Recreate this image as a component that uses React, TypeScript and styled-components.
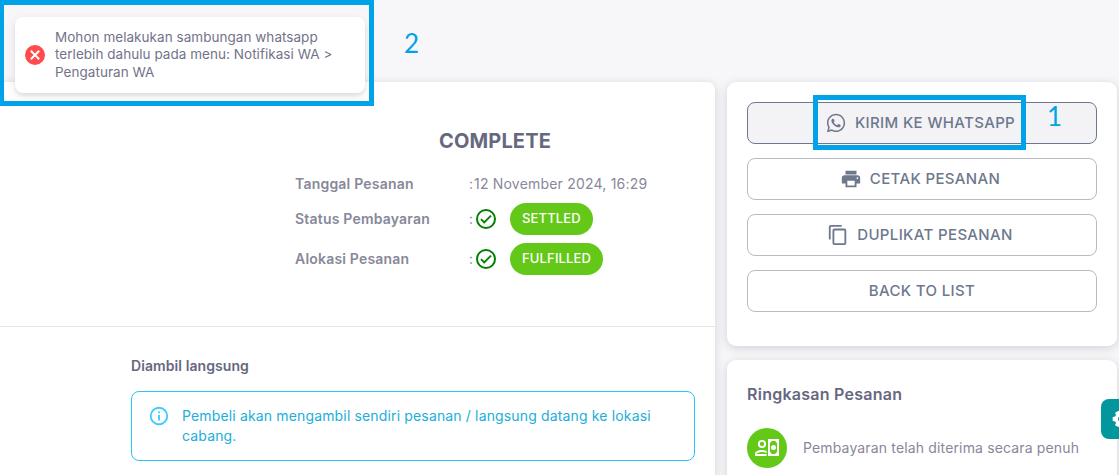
import React from 'react';
import styled, { createGlobalStyle } from 'styled-components';

const GlobalStyle = createGlobalStyle`
  *, *::before, *::after { box-sizing: border-box; }
  body {
    margin: 0;
    background: #f7f7f9;
    font-family: Inter, "Liberation Sans", sans-serif;
    color: rgba(76, 78, 100, 0.68);
    letter-spacing: 0.15px;
    overflow: hidden;
  }
  h2, h3, p { margin: 0; }
`;

const Page = styled.main`
  position: relative;
  display: flex;
  align-items: stretch;
  gap: 12px;
  width: 1119px;
  height: 475px;
  padding-top: 82px;
  overflow: hidden;
`;

const cardShadow = '0 2px 10px rgba(76, 78, 100, 0.22)';

const OrderCard = styled.section`
  width: 715px;
  height: 420px;
  background: #fff;
  border-radius: 0 8px 0 0;
  box-shadow: ${cardShadow};
`;

const Summary = styled.div`
  height: 245px;
  padding: 47px 0 0 295px;
  border-bottom: 1px solid #e5e5e8;
`;

const Status = styled.h2`
  width: 399px;
  padding-left: 144px;
  font-size: 20px;
  font-weight: 700;
  line-height: 24px;
  letter-spacing: 0.15px;
  color: #666880;
`;

const Details = styled.div`
  display: grid;
  grid-template-rows: 30px 40px 40px;
  margin-top: 16px;
`;

const DetailRow = styled.div`
  display: grid;
  grid-template-columns: 174px 1fr;
  align-items: center;
  font-size: 14px;
  color: #87889a;
`;

const Label = styled.span`
  padding-bottom: 2px;
  font-weight: 600;
  letter-spacing: 0.2px;
`;

const Value = styled.div`
  display: flex;
  align-items: center;
`;

const ValueText = styled.span`
  padding-bottom: 2px;
  letter-spacing: 0.2px;
`;

const Colon = styled.span`
  width: 5px;
  padding-bottom: 2px;
`;

const Pill = styled.span`
  display: flex;
  align-items: center;
  height: 32px;
  margin-left: 12px;
  padding: 0 12px 2px;
  border-radius: 16px;
  background: #64c818;
  color: #fff;
  font-size: 13px;
  font-weight: 500;
  letter-spacing: 0.15px;
`;

const Pickup = styled.div`
  padding: 28px 20px 0 131px;
`;

const PickupTitle = styled.h3`
  font-size: 14px;
  font-weight: 600;
  line-height: 21px;
  letter-spacing: 0.08px;
  color: #666880;
`;

const InfoBox = styled.div`
  display: flex;
  gap: 12px;
  height: 70px;
  margin-top: 15px;
  padding: 14px 16px;
  border: 1px solid #26c6f9;
  border-radius: 8px;
  color: #21aed9;
  font-size: 14px;
  line-height: 20px;
  svg { color: #3ccbf9; margin-top: -1px; }
`;

const Side = styled.aside`
  display: flex;
  flex-direction: column;
  gap: 14px;
  width: 390px;
`;

const SideCard = styled.section<{ $height: number }>`
  flex: none;
  height: ${(p) => p.$height}px;
  padding: 20px;
  background: #fff;
  border-radius: 9px;
  box-shadow: ${cardShadow};
`;

const ActionList = styled.div`
  display: flex;
  flex-direction: column;
  gap: 14px;
`;

const ActionButton = styled.button<{ $active?: boolean }>`
  display: flex;
  align-items: center;
  justify-content: center;
  gap: 8px;
  height: 42px;
  padding: 0;
  border: 1px solid ${(p) => (p.$active ? '#6d788d' : '#b6bbc6')};
  border-radius: 8px;
  background: ${(p) => (p.$active ? '#f3f3f6' : '#fff')};
  color: #6d788d;
  font-family: inherit;
  font-size: 15px;
  font-weight: 500;
  letter-spacing: 0.36px;
  svg { margin-left: -4px; }
`;

const ButtonLabel = styled.span`
  padding-bottom: 2px;
`;

const SideTitle = styled.h3`
  padding-top: 2px;
  font-size: 16px;
  font-weight: 600;
  line-height: 24px;
  letter-spacing: 0.25px;
  color: #666880;
`;

const PaymentRow = styled.div`
  display: flex;
  align-items: center;
  gap: 16px;
  margin-top: 22px;
  font-size: 14px;
  color: #87889a;
`;

const PaymentText = styled.span`
  padding-bottom: 2px;
`;

const Avatar = styled.span`
  display: grid;
  place-items: center;
  width: 40px;
  height: 40px;
  border-radius: 50%;
  background: #64c818;
  color: #fff;
`;

const SettingsTab = styled.div`
  position: absolute;
  top: 399px;
  right: -20px;
  display: flex;
  align-items: center;
  width: 38px;
  height: 40px;
  padding-left: 10px;
  border-radius: 8px;
  background: #02979d;
  color: #fff;
  svg { transform: rotate(30deg); }
`;

const Toast = styled.div`
  position: absolute;
  top: 17px;
  left: 15px;
  display: flex;
  align-items: center;
  width: 350px;
  height: 76px;
  padding: 8px 10px;
  border-radius: 8px;
  background: #fff;
  box-shadow: 0 3px 10px rgba(0, 0, 0, 0.1), 0 3px 3px rgba(0, 0, 0, 0.05);
  color: #72738a;
  font-size: 13.5px;
  line-height: 17.55px;
  letter-spacing: 0.04px;
`;

const ToastText = styled.p`
  margin: 0 10px;
  white-space: nowrap;
`;

const Marker = styled.div<{ $x: number; $y: number; $w: number; $h: number }>`
  position: absolute;
  left: ${(p) => p.$x}px;
  top: ${(p) => p.$y}px;
  width: ${(p) => p.$w}px;
  height: ${(p) => p.$h}px;
  border: 5px solid #00a2e8;
`;

const StepNumber = styled.span<{ $x: number; $y: number }>`
  position: absolute;
  left: ${(p) => p.$x}px;
  top: ${(p) => p.$y}px;
  color: #00a2e8;
  font-family: Lato, sans-serif;
  font-size: 26px;
  line-height: 32px;
  letter-spacing: 0;
`;

const Glyph = styled.svg`
  flex: none;
  display: block;
  fill: currentColor;
`;

const paths = {
  whatsapp:
    'M12.04 2C6.58 2 2.13 6.45 2.13 11.91C2.13 13.66 2.59 15.36 3.45 16.86L2.05 22L7.3 20.62C8.75 21.41 10.38 21.83 12.04 21.83C17.5 21.83 21.95 17.38 21.95 11.92C21.95 9.27 20.92 6.78 19.05 4.91C17.18 3.03 14.69 2 12.04 2M12.05 3.67C14.25 3.67 16.31 4.53 17.87 6.09C19.42 7.65 20.28 9.72 20.28 11.92C20.28 16.46 16.58 20.15 12.04 20.15C10.56 20.15 9.11 19.76 7.85 19L7.55 18.83L4.43 19.65L5.26 16.61L5.06 16.29C4.24 15 3.8 13.47 3.8 11.91C3.81 7.37 7.5 3.67 12.05 3.67M8.53 7.33C8.37 7.33 8.1 7.39 7.87 7.64C7.65 7.89 7 8.5 7 9.71C7 10.93 7.89 12.1 8 12.27C8.14 12.44 9.76 14.94 12.25 16C12.84 16.27 13.3 16.42 13.66 16.53C14.25 16.72 14.79 16.69 15.22 16.63C15.7 16.56 16.68 16.03 16.89 15.45C17.1 14.87 17.1 14.38 17.04 14.27C16.97 14.17 16.81 14.11 16.56 14C16.31 13.86 15.09 13.26 14.87 13.18C14.64 13.1 14.5 13.06 14.31 13.3C14.15 13.55 13.67 14.11 13.53 14.27C13.38 14.44 13.24 14.46 13 14.34C12.74 14.21 11.94 13.95 11 13.11C10.26 12.45 9.77 11.64 9.62 11.39C9.5 11.15 9.61 11 9.73 10.89C9.84 10.78 10 10.6 10.1 10.45C10.23 10.31 10.27 10.2 10.35 10.04C10.43 9.87 10.39 9.73 10.33 9.61C10.27 9.5 9.77 8.26 9.56 7.77C9.36 7.29 9.16 7.35 9 7.34C8.86 7.34 8.7 7.33 8.53 7.33Z',
  printer:
    'M18,3H6V7H18M19,12A1,1 0 0,1 18,11A1,1 0 0,1 19,10A1,1 0 0,1 20,11A1,1 0 0,1 19,12M16,19H8V14H16M19,8H5A3,3 0 0,0 2,11V17H6V21H18V17H22V11A3,3 0 0,0 19,8Z',
  copy:
    'M19,21H8V7H19M19,5H8A2,2 0 0,0 6,7V21A2,2 0 0,0 8,23H19A2,2 0 0,0 21,21V7A2,2 0 0,0 19,5M16,1H4A2,2 0 0,0 2,3V17H4V3H16V1Z',
  info:
    'M11,9H13V7H11M12,20C7.59,20 4,16.41 4,12C4,7.59 7.59,4 12,4C16.41,4 20,7.59 20,12C20,16.41 16.41,20 12,20M12,2A10,10 0 0,0 2,12A10,10 0 0,0 12,22A10,10 0 0,0 22,12A10,10 0 0,0 12,2M11,17H13V11H11V17Z',
  cog:
    'M12,15.5A3.5,3.5 0 0,1 8.5,12A3.5,3.5 0 0,1 12,8.5A3.5,3.5 0 0,1 15.5,12A3.5,3.5 0 0,1 12,15.5M19.43,12.97C19.47,12.65 19.5,12.33 19.5,12C19.5,11.67 19.47,11.34 19.43,11L21.54,9.37C21.73,9.22 21.78,8.95 21.66,8.73L19.66,5.27C19.54,5.05 19.27,4.96 19.05,5.05L16.56,6.05C16.04,5.66 15.5,5.32 14.87,5.07L14.5,2.42C14.46,2.18 14.25,2 14,2H10C9.75,2 9.54,2.18 9.5,2.42L9.13,5.07C8.5,5.32 7.96,5.66 7.44,6.05L4.95,5.05C4.73,4.96 4.46,5.05 4.34,5.27L2.34,8.73C2.21,8.95 2.27,9.22 2.46,9.37L4.57,11C4.53,11.34 4.5,11.67 4.5,12C4.5,12.33 4.53,12.65 4.57,12.97L2.46,14.63C2.27,14.78 2.21,15.05 2.34,15.27L4.34,18.73C4.46,18.95 4.73,19.03 4.95,18.95L7.44,17.94C7.96,18.34 8.5,18.68 9.13,18.93L9.5,21.58C9.54,21.82 9.75,22 10,22H14C14.25,22 14.46,21.82 14.5,21.58L14.87,18.93C15.5,18.67 16.04,18.34 16.56,17.94L19.05,18.95C19.27,19.03 19.54,18.95 19.66,18.73L21.66,15.27C21.78,15.05 21.73,14.78 21.54,14.63L19.43,12.97Z',
};

function Icon({ name, size = 22 }: { name: keyof typeof paths; size?: number }) {
  return (
    <Glyph width={size} height={size} viewBox="0 0 24 24">
      <path d={paths[name]} />
    </Glyph>
  );
}

function CheckIcon() {
  return (
    <Glyph width={24} height={24} viewBox="0 0 24 24">
      <circle cx="12" cy="12" r="9" fill="none" stroke="#008000" strokeWidth="2" />
      <path d="M7 12.2l3.200 3.200 6.800-6.800" fill="none" stroke="#008000" strokeWidth="1.900" />
    </Glyph>
  );
}

function ErrorIcon() {
  return (
    <Glyph width={20} height={20} viewBox="0 0 20 20">
      <circle cx="10" cy="10" r="10" fill="#ff4b4b" />
      <path d="M5.800 5.800l8.400 8.400M14.200 5.800l-8.400 8.400" fill="none" stroke="#fff" strokeWidth="2" />
    </Glyph>
  );
}

function PayerIcon() {
  return (
    <Glyph width={24} height={18} viewBox="0 0 24 18">
      <circle cx="7" cy="5" r="3.1" fill="none" stroke="currentColor" strokeWidth="1.9" />
      <path
        fillRule="evenodd"
        d="M0 17v-2.4c0-2.3 3.8-3.6 7-3.6 1.7 0 3.3.3 4.6.9v2c-1.3-.6-2.9-1-4.6-1-2.9 0-5.1 1.1-5.1 1.8v.4h9.7V17z M13 0h11v17H13z M16.6 2a2 2 0 0 1-1.7 1.8v9.4a2 2 0 0 1 1.7 1.8h3.8a2 2 0 0 1 1.7-1.8V3.8A2 2 0 0 1 20.4 2z"
      />
      <circle cx="18.5" cy="8.5" r="2.5" />
    </Glyph>
  );
}

export default function App() {
  return (
    <>
      <GlobalStyle />
      <Page>
        <OrderCard>
          <Summary>
            <Status>COMPLETE</Status>
            <Details>
              <DetailRow>
                <Label>Tanggal Pesanan</Label>
                <Value><Colon>:</Colon><ValueText>12 November 2024, 16:29</ValueText></Value>
              </DetailRow>
              <DetailRow>
                <Label>Status Pembayaran</Label>
                <Value><Colon>:</Colon><CheckIcon /><Pill>SETTLED</Pill></Value>
              </DetailRow>
              <DetailRow>
                <Label>Alokasi Pesanan</Label>
                <Value><Colon>:</Colon><CheckIcon /><Pill>FULFILLED</Pill></Value>
              </DetailRow>
            </Details>
          </Summary>
          <Pickup>
            <PickupTitle>Diambil langsung</PickupTitle>
            <InfoBox>
              <Icon name="info" />
              <p>Pembeli akan mengambil sendiri pesanan / langsung datang ke lokasi<br />cabang.</p>
            </InfoBox>
          </Pickup>
        </OrderCard>
        <Side>
          <SideCard $height={264}>
            <ActionList>
              <ActionButton $active><Icon name="whatsapp" /><ButtonLabel>KIRIM KE WHATSAPP</ButtonLabel></ActionButton>
              <ActionButton><Icon name="printer" /><ButtonLabel>CETAK PESANAN</ButtonLabel></ActionButton>
              <ActionButton><Icon name="copy" /><ButtonLabel>DUPLIKAT PESANAN</ButtonLabel></ActionButton>
              <ActionButton><ButtonLabel>BACK TO LIST</ButtonLabel></ActionButton>
            </ActionList>
          </SideCard>
          <SideCard $height={160}>
            <SideTitle>Ringkasan Pesanan</SideTitle>
            <PaymentRow>
              <Avatar><PayerIcon /></Avatar>
              <PaymentText>Pembayaran telah diterima secara penuh</PaymentText>
            </PaymentRow>
          </SideCard>
        </Side>
        <SettingsTab><Icon name="cog" size={20} /></SettingsTab>
        <Toast>
          <ErrorIcon />
          <ToastText>
            Mohon melakukan sambungan whatsapp<br />
            terlebih dahulu pada menu: Notifikasi WA &gt;<br />
            Pengaturan WA
          </ToastText>
        </Toast>
        <Marker $x={-1} $y={0} $w={375} $h={106} />
        <Marker $x={813} $y={95} $w={213} $h={55} />
        <StepNumber $x={404} $y={27}>2</StepNumber>
        <StepNumber $x={1047} $y={100}>1</StepNumber>
      </Page>
    </>
  );
}
